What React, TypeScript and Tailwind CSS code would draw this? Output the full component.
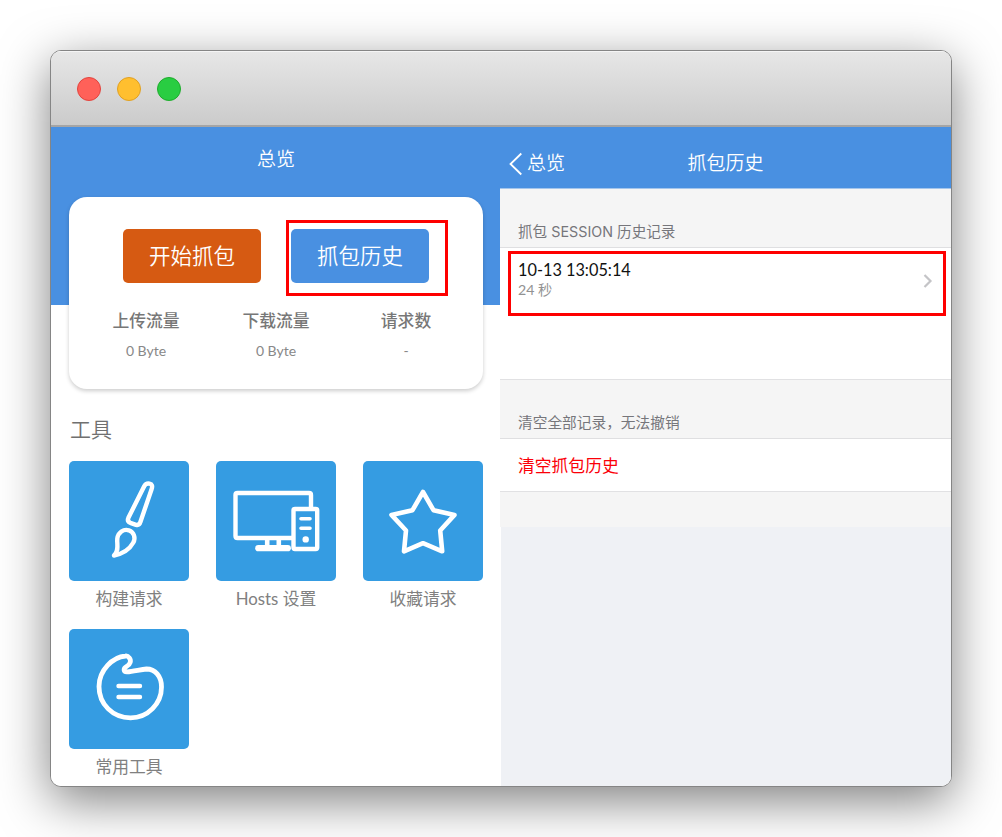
import type { ReactNode } from "react";

const stats = [
  { label: "上传流量", value: "0 Byte" },
  { label: "下载流量", value: "0 Byte" },
  { label: "请求数", value: "-" },
];

function BrushIcon() {
  return (
    <svg viewBox="0 0 120 120" className="size-[120px]" fill="none" stroke="white" strokeWidth="4.4" strokeLinecap="round" strokeLinejoin="round">
      <path d="M75.2 25.2 L59.4 56.8 Q57.9 60.2 61.3 61.8 L67 63.8 Q70.3 64.6 71.3 61.2 L82.5 28.5 Q84.4 23.3 80.5 22.6 Q76.8 22.1 75.2 25.2 Z" />
      <path d="M45 94.5 C50.5 89.5 47.7 83.5 48.3 77.5 C49.2 71.5 54.5 67.7 59.8 69.3 C65 71.2 67 76.8 64.2 81.8 C60.5 88.5 53.5 92.8 45 94.5 Z" />
    </svg>
  );
}

function ComputerIcon() {
  return (
    <svg viewBox="0 0 120 120" className="size-[120px]" fill="none" stroke="white" strokeWidth="4.4" strokeLinecap="round" strokeLinejoin="round">
      <path d="M95 47 V34 Q95 32 93 32 H21.5 Q19.5 32 19.5 34 V75 Q19.5 77 21.5 77 H76" />
      <rect x="77.5" y="48" width="23.7" height="40" rx="1.5" />
      <path d="M85 57.7 H94 M85 67.2 H94" strokeWidth="3.6" />
      <circle cx="89.7" cy="78.4" r="3.2" fill="white" stroke="none" />
      <path d="M51.2 78 V86 M62.8 78 V86" strokeLinecap="butt" strokeWidth="4.6" />
      <path d="M42.3 87.2 H71.8" strokeWidth="6.2" />
    </svg>
  );
}

function StarIcon() {
  return (
    <svg viewBox="0 0 120 120" className="size-[120px]" fill="none" stroke="white" strokeWidth="4.6" strokeLinejoin="round">
      <path d="M60 31 L70.5 49.2 L91.5 53.9 L77.2 69.5 L79.2 90.3 L60 82.2 L41 90.3 L43 69.5 L28.5 53.9 L49.5 49.2 Z" />
    </svg>
  );
}

function FistIcon() {
  return (
    <svg viewBox="0 0 120 120" className="size-[120px]" fill="none" stroke="white" strokeWidth="4.8" strokeLinecap="round" strokeLinejoin="round">
      <path d="M56.5 27 C44 28 30 41 30 57.5 C30 75.5 44 88.8 61.5 88.8 C79 88.8 92.5 74.5 92.5 58 C92.5 47 86 40 77.5 40 C71.5 40.5 64.5 42.5 58 42.9 C54.5 43 54 39.5 57.5 37.5 C61.5 35.3 62.5 31.5 60.2 28.8 C59.3 27.5 58 26.8 56.5 27 Z" />
      <path d="M49.5 57 H71 M49.5 68 H71" strokeWidth="4.4" />
    </svg>
  );
}

function Tool({ label, children }: { label: string; children: ReactNode }) {
  return (
    <div className="flex h-[168px] w-[120px] flex-col items-center">
      <div className="size-[120px] overflow-hidden rounded-[5px] bg-[#359ce2]">{children}</div>
      <span className="mt-[5px] text-[16.8px] leading-[26px] font-normal whitespace-nowrap text-[#808080]">{label}</span>
    </div>
  );
}

function Overview() {
  return (
    <section className="flex w-[449px] shrink-0 flex-col bg-white">
      <header className="h-[178px] shrink-0 bg-[#4990e1] pt-[18px] pl-px text-center text-[19px] leading-[28px] text-white">
        总览
      </header>
      <div className="relative mx-[18px] -mt-[108px] w-[414px] shrink-0 self-start">
        <div className="flex h-[192px] flex-col rounded-[18px] bg-white pt-8 shadow-[0_2px_4px_rgba(0,0,0,0.2)]">
          <div className="flex justify-center gap-[30px]">
            <button className="h-[54px] w-[138px] rounded-[5px] bg-[#d65a12] text-[21.5px] leading-[54px] text-white">开始抓包</button>
            <button className="h-[54px] w-[138px] rounded-[5px] bg-[#4990e1] text-[21.5px] leading-[54px] text-white">抓包历史</button>
          </div>
          <div className="mx-3 mt-[25px] grid grid-cols-3 text-center">
            {stats.map((stat) => (
              <div key={stat.label} className="flex flex-col">
                <span className="text-[16.8px] leading-[26px] font-medium text-[#777]">{stat.label}</span>
                <span className="mt-[6px] text-[14px] leading-[22px] font-normal text-[#888]">{stat.value}</span>
              </div>
            ))}
          </div>
        </div>
        <div className="pointer-events-none absolute top-[23px] left-[217px] h-[76px] w-[162px] border-3 border-[#fe0000]" />
      </div>
      <h2 className="mt-[24px] ml-[19px] text-[21px] leading-[32px] text-[#707070]">工具</h2>
      <div className="mt-[16px] ml-[18px] grid grid-cols-[120px_120px_120px] gap-x-[27px]">
        <Tool label="构建请求"><BrushIcon /></Tool>
        <Tool label="Hosts 设置"><ComputerIcon /></Tool>
        <Tool label="收藏请求"><StarIcon /></Tool>
        <Tool label="常用工具"><FistIcon /></Tool>
      </div>
    </section>
  );
}

function History() {
  return (
    <section className="flex min-w-0 flex-1 flex-col bg-white">
      <header className="grid h-[62px] shrink-0 grid-cols-[1fr_auto_1fr] items-center border-b border-[#a5c6ec] bg-[#4990e1] pt-[11px] text-[19px] leading-[28px] text-white">
        <div className="flex items-center pl-[9px]">
          <svg viewBox="0 0 14 24" className="mt-px mr-1 h-6 w-3.5" fill="none" stroke="white" strokeWidth="1.8">
            <path d="M12.3 1.5 L1.5 12 L12.3 22.5" />
          </svg>
          <span>总览</span>
        </div>
        <h1>抓包历史</h1>
      </header>
      <div className="h-[59px] shrink-0 border-b border-[#dfdfe1] bg-[#f5f5f5] pt-[32px] pl-[18px] font-['Inter','Noto_Sans_CJK_SC',sans-serif] text-[14.6px] leading-[22px] font-normal text-[#76767b]">
        抓包 <span className="text-[14.3px]">SESSION</span> 历史记录
      </div>
      <div className="relative h-[132px] shrink-0 border-b border-[#e1e1e3] bg-white">
        <div className="flex items-start justify-between pt-[11px] pr-[18px] pl-[18px]">
          <div className="flex flex-col">
            <span className="text-[16.3px] leading-[21px] font-normal text-[#111]">10-13 13:05:14</span>
            <span className="text-[14.2px] leading-[20px] font-normal text-[#929292]">24 秒</span>
          </div>
          <svg viewBox="0 0 10 16" className="mt-[14px] h-4 w-2.5" fill="none" stroke="#c4c4c7" strokeWidth="2.2">
            <path d="M1.5 2 L7.5 8 L1.5 14" />
          </svg>
        </div>
        <div className="pointer-events-none absolute top-[3px] left-2 h-[65px] w-[438px] border-3 border-[#fe0000]" />
      </div>
      <div className="h-[59px] shrink-0 border-b border-[#dfdfe1] bg-[#f5f5f5] pt-[31px] pl-[18px] text-[14.7px] leading-[22px] font-normal text-[#76767b]">
        清空全部记录，无法撤销
      </div>
      <button className="h-[53px] shrink-0 border-b border-[#e1e1e3] bg-white pt-px pl-[18px] text-left text-[16.8px] leading-[52px] font-normal text-[#fb0008]">
        清空抓包历史
      </button>
      <div className="h-[35px] shrink-0 bg-[#f5f5f5]" />
      <div className="ml-px flex-1 bg-[#eff1f5]" />
    </section>
  );
}

export default function App() {
  return (
    <main className="flex h-[837px] w-[1002px] overflow-hidden bg-white p-[50px] font-['Lato','Noto_Sans_CJK_SC',sans-serif] font-[350]">
      <div className="flex h-[737px] w-[902px] shrink-0 flex-col overflow-hidden rounded-[11px] border border-[#858585] bg-white shadow-[0_14px_50px_rgba(0,0,0,0.5)]">
        <div className="flex h-[76px] shrink-0 items-center gap-4 border-b-2 border-[#a5a5a5] bg-linear-to-b from-[#e7e7e7] to-[#cbcbcb] pt-0.5 pl-[26px] shadow-[inset_0_1px_0_#f5f5f5]">
          <span className="size-6 rounded-full border border-[#e2443e] bg-[#ff6159]" />
          <span className="size-6 rounded-full border border-[#e0a023] bg-[#ffbf2f]" />
          <span className="size-6 rounded-full border border-[#1eac2c] bg-[#29cd42]" />
        </div>
        <div className="flex min-h-0 flex-1">
          <Overview />
          <History />
        </div>
      </div>
    </main>
  );
}
